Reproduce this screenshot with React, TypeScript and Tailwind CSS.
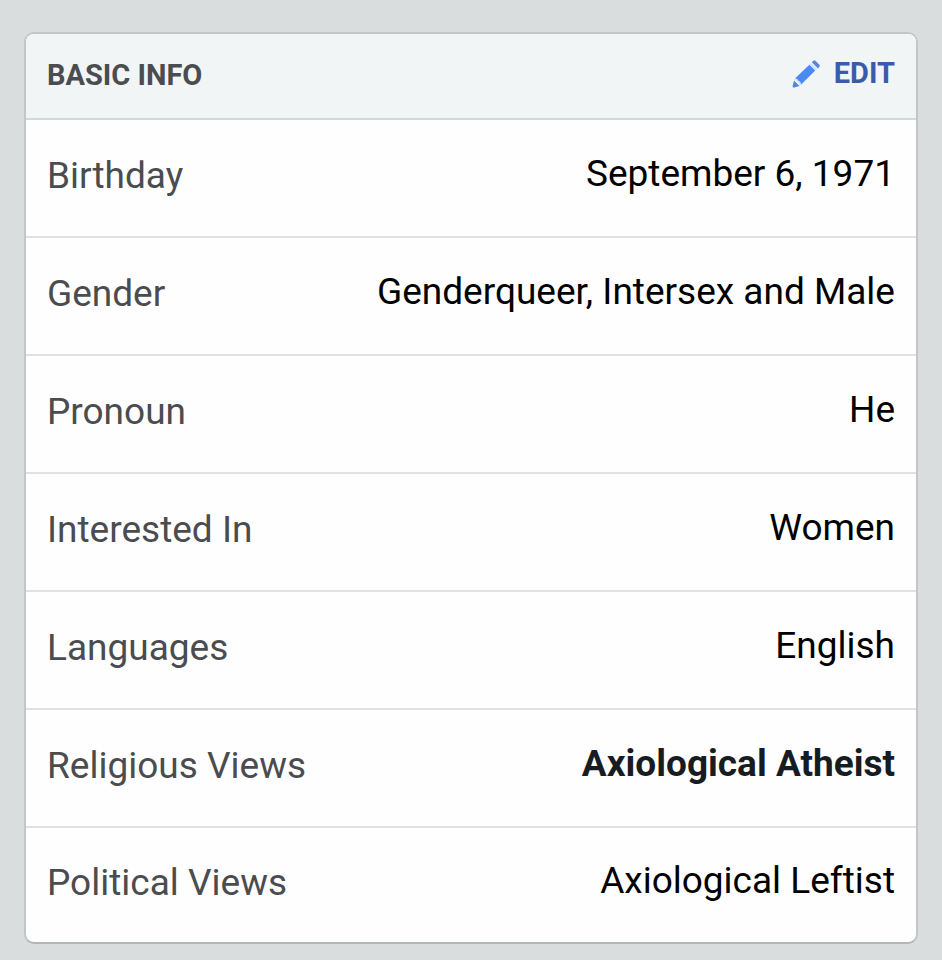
import React from 'react';

interface InfoRow {
  label: string;
  value: string;
  bold?: boolean;
}

const rows: InfoRow[] = [
  { label: 'Birthday', value: 'September 6, 1971' },
  { label: 'Gender', value: 'Genderqueer, Intersex and Male' },
  { label: 'Pronoun', value: 'He' },
  { label: 'Interested In', value: 'Women' },
  { label: 'Languages', value: 'English' },
  { label: 'Religious Views', value: 'Axiological Atheist', bold: true },
  { label: 'Political Views', value: 'Axiological Leftist' },
];

function PencilIcon() {
  return (
    <svg width="30" height="30" viewBox="0 0 30 30" aria-hidden="true">
      <path d="M2 21.5 L7.5 27 L2.2 28.5 Q0.3 28.8 0.6 27 Z" fill="#5585d6" />
      <path d="M3.2 19.2 L17.4 5.8 L23.2 11.6 L9.2 25.6 Q8 22 6.4 21.8 Q5.6 20 3.2 19.2 Z" fill="#4a88f2" />
      <path d="M2.6 20 Q5.4 20.4 6 22.4 Q8.2 23.2 8.6 26.2" fill="none" stroke="#c9e2fb" strokeWidth="1.6" />
      <path d="M18.2 4.8 L24.4 10.8" stroke="#c9e2fb" strokeWidth="2.2" />
      <path d="M19.8 3.2 L21.4 1.7 Q22.4 0.9 23.4 1.8 L27.4 5.8 Q28.2 6.8 27.4 7.8 L26 9.4 Z" fill="#5585d6" />
    </svg>
  );
}

export default function App() {
  return (
    <div className="min-h-screen bg-[#d9dddd] px-6 pt-8 pb-4 font-['Roboto',sans-serif]">
      <section className="overflow-hidden rounded-[10px] border-2 border-[#c3c6c7] border-b-[#b3b6b7] bg-[#fefefe]">
        <header className="flex h-[84px] items-center justify-between bg-[#f2f5f6] px-[21px]">
          <h1 className="text-[29px] font-bold text-[#4a4d50]">BASIC INFO</h1>
          <button type="button" className="flex items-center gap-3 pb-1 text-[29px] font-bold text-[#3a5ca8]">
            <PencilIcon />
            EDIT
          </button>
        </header>
        <dl>
          {rows.map((row) => (
            <div
              key={row.label}
              className="flex h-[118px] items-center justify-between border-t-2 border-[#dfe1e2] px-[21px] pb-1 first:border-[#d3d8d9] last:h-[116px]"
            >
              <dt className="text-[37px] leading-10 text-[#4a4c4f]">{row.label}</dt>
              <dd
                className={
                  row.bold
                    ? 'pb-1 text-[37px] leading-10 font-bold text-[#171c22]'
                    : 'pb-1 text-[37px] leading-10 text-black'
                }
              >
                {row.value}
              </dd>
            </div>
          ))}
        </dl>
      </section>
    </div>
  );
}
